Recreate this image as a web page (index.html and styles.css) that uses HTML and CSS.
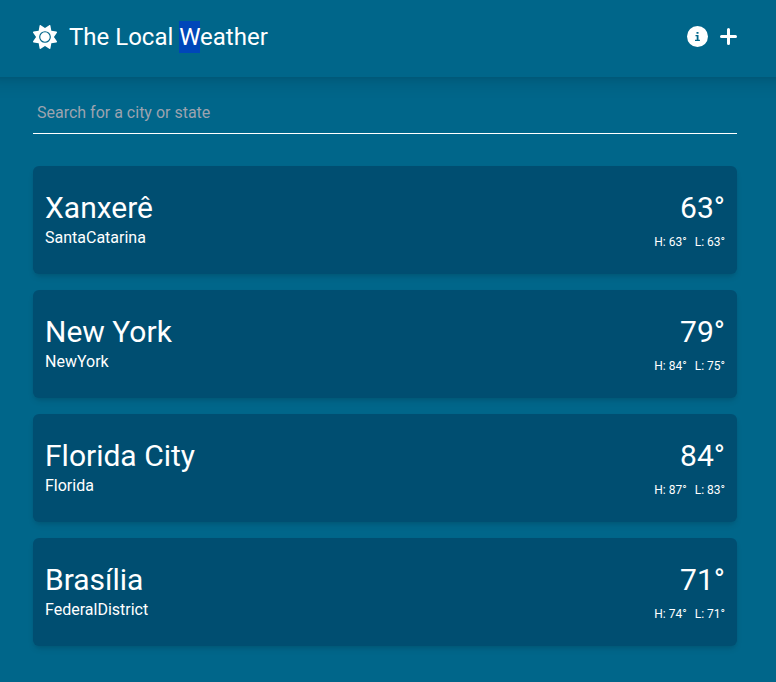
FILE: index.html
```html
<!DOCTYPE html>
<html lang="en">
<head>
<meta charset="utf-8">
<title>The Local Weather</title>
<link rel="stylesheet" href="styles.css">
</head>
<body>
<header class="header">
  <nav class="nav">
    <a class="brand">
      <svg class="icon-sun" viewBox="0 0 512 512"><path fill="currentColor" d="M361.500 1.200c5 2.100 8.600 6.600 9.600 11.900L391 121l107.900 19.800c5.300 1 9.800 4.600 11.900 9.600s1.500 10.700-1.600 15.200L446.900 256l62.300 90.300c3.100 4.500 3.700 10.200 1.600 15.200s-6.600 8.600-11.900 9.600L391 391 371.100 498.900c-1 5.300-4.600 9.800-9.600 11.900s-10.700 1.500-15.200-1.600L256 446.900l-90.300 62.300c-4.500 3.100-10.200 3.700-15.200 1.600s-8.600-6.600-9.600-11.900L121 391 13.100 371.100c-5.300-1-9.800-4.600-11.900-9.600s-1.500-10.700 1.600-15.200L65.100 256 2.800 165.700c-3.100-4.500-3.700-10.200-1.600-15.200s6.600-8.600 11.900-9.600L121 121 140.900 13.100c1-5.300 4.600-9.800 9.600-11.900s10.700-1.500 15.200 1.600L256 65.100 346.300 2.800c4.500-3.100 10.200-3.700 15.200-1.600z"/><circle cx="256" cy="256" r="113" fill="none" stroke="#00668a" stroke-width="24"/></svg>
      <span class="title">The Local <span class="selected">W</span>eather</span>
    </a>
    <div class="actions">
      <svg class="icon-info" viewBox="0 0 21 21"><circle cx="10.500" cy="10.500" r="10.500" fill="currentColor"/><path fill="#00668a" d="M9.500 6h2v1.700h-2zM8.500 9h3v4.700h1.400V15H8v-1.300h1.700v-3.400H8.500z"/></svg>
      <svg class="icon-plus" viewBox="0 0 17 17"><path fill="none" stroke="currentColor" stroke-width="3" stroke-linecap="round" d="M8.500 1.500v14M1.500 8.500h14"/></svg>
    </div>
  </nav>
</header>
<main class="main">
  <input class="search" type="text" placeholder="Search for a city or state">
  <div class="cities">
    <article class="card"><div><h2 class="city">Xanxerê</h2><p class="state">SantaCatarina</p></div><div class="weather"><p class="temp">63°</p><div class="range"><span>H: 63°</span><span>L: 63°</span></div></div></article>
    <article class="card"><div><h2 class="city">New York</h2><p class="state">NewYork</p></div><div class="weather"><p class="temp">79°</p><div class="range"><span>H: 84°</span><span>L: 75°</span></div></div></article>
    <article class="card"><div><h2 class="city">Florida City</h2><p class="state">Florida</p></div><div class="weather"><p class="temp">84°</p><div class="range"><span>H: 87°</span><span>L: 83°</span></div></div></article>
    <article class="card"><div><h2 class="city">Brasília</h2><p class="state">FederalDistrict</p></div><div class="weather"><p class="temp">71°</p><div class="range"><span>H: 74°</span><span>L: 71°</span></div></div></article>
  </div>
</main>
</body>
</html>
```
FILE: styles.css
```css
* { box-sizing: border-box; margin: 0; padding: 0; }
body { min-height: 100vh; background: #00668a; color: #fff; font-family: Roboto, sans-serif; font-size: 16px; line-height: 24px; overflow-x: hidden; }
.header { height: 77px; margin: 0 -16px; padding: 0 16px; background: #00668a; box-shadow: 0 10px 15px -3px rgba(0,0,0,.1), 0 4px 6px -4px rgba(0,0,0,.1); }
.nav { display: flex; align-items: center; justify-content: space-between; padding: 21px 39px 0 33px; }
.brand { display: flex; align-items: center; gap: 12px; }
.icon-sun { width: 24px; height: 24px; }
.title { font-size: 24px; line-height: 32px; }
.selected { display: inline-block; background: #0046b9; letter-spacing: -.5px; }
.actions { display: flex; align-items: center; gap: 12px; height: 31px; align-self: flex-start; }
.icon-info { width: 21px; height: 21px; }
.icon-plus { width: 17px; height: 17px; }
.main { padding: 16px 39px 0 33px; }
.search { display: block; width: 100%; height: 41px; padding: 7px 4px 9px; border: 0; border-bottom: 1px solid #fff; background: transparent; color: #fff; font: inherit; outline: 0; }
.search::placeholder { color: #9ca3af; }
.cities { display: flex; flex-direction: column; gap: 16px; margin-top: 32px; }
.card { display: flex; align-items: center; justify-content: space-between; height: 108px; padding: 0 12px; border-radius: 6px; background: #004e71; box-shadow: 0 4px 6px -1px rgba(0,0,0,.1), 0 2px 4px -2px rgba(0,0,0,.1); }
.city, .temp { font-size: 30px; font-weight: 400; line-height: 36px; }
.weather { display: flex; flex-direction: column; align-items: flex-end; gap: 8px; }
.range { display: flex; gap: 8px; font-size: 12px; line-height: 16px; }
```
